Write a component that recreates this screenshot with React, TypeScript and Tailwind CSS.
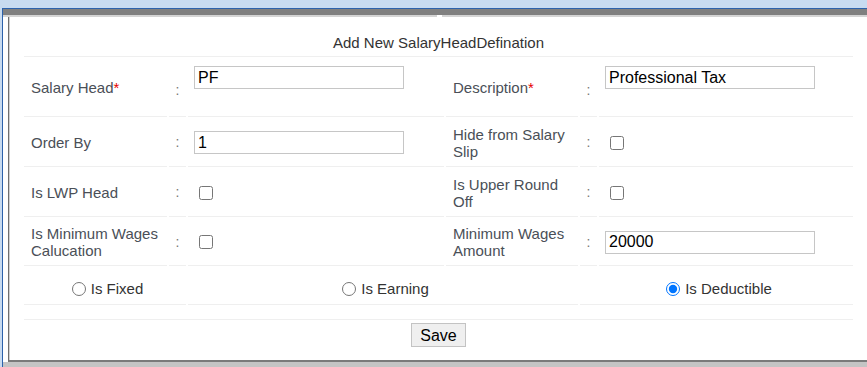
import { useState } from "react";

const COLS = "grid grid-cols-[143px_17px_256px_132px_17px_254px] gap-x-[2px]";
const LINE = "border-b border-[#efefef]";
const LABEL = `flex items-center pl-[7px] pr-[4px] text-[15px] leading-[17px] text-[#4a4f57] ${LINE}`;
const COLON = `flex items-center justify-center text-[14px] text-[#777] ${LINE}`;
const INPUT =
  "w-[210px] h-[23px] border border-[#c6c6c6] bg-white px-[3px] text-[16px] text-black outline-none";
const CHECK = "ml-[5px] h-[14px] w-[14px]";

function Req() {
  return <span className="text-[#e60000]">*</span>;
}

export default function App() {
  const [salaryHead, setSalaryHead] = useState("PF");
  const [description, setDescription] = useState("Professional Tax");
  const [orderBy, setOrderBy] = useState("1");
  const [minWages, setMinWages] = useState("20000");
  const [kind, setKind] = useState("deductible");

  return (
    <div className="flex h-[367px] w-[867px] flex-col overflow-hidden bg-[#c8dbf0] font-['Liberation_Sans',Arial,sans-serif]">
      <div className="h-[8px]" />
      <div className="flex flex-1 flex-col pl-[2px]">
        <div className="flex flex-1 flex-col border-l border-t border-[#2d62ab] bg-white">
          {/* window chrome */}
          <div className="h-[6px] bg-[#808080]" />
          <div className="flex h-[2px]">
            <div className="w-[434px] bg-[#d4d4d4]" />
            <div className="w-[5px] bg-white" />
            <div className="flex-1 bg-[#d4d4d4]" />
          </div>

          <div className="flex flex-1">
            <div className="w-[5px] bg-white" />
            <div className="flex flex-1 border-b-2 border-l border-b-[#7a7a7a] border-l-[#6f6f6f]">
              <div className="flex flex-1 flex-col border-l border-[#d0d0d0] bg-white pl-[14px]">
                <div className="flex w-[829px] flex-col gap-y-[2px]">
                  {/* title */}
                  <div className={`flex h-[40px] items-end justify-center pb-[5px] text-[15px] leading-[17px] text-[#333] ${LINE}`}>
                    Add New SalaryHeadDefination
                  </div>

                  {/* row 1 */}
                  <div className={`${COLS} h-[58px]`}>
                    <div className={LABEL}>
                      <span>
                        Salary Head<Req />
                      </span>
                    </div>
                    <div className={`${COLON} pt-[5px]`}>:</div>
                    <div className={`flex items-start pl-[6px] pt-[7px] ${LINE}`}>
                      <input
                        className={INPUT}
                        value={salaryHead}
                        onChange={(e) => setSalaryHead(e.target.value)}
                      />
                    </div>
                    <div className={LABEL}>
                      <span>
                        Description<Req />
                      </span>
                    </div>
                    <div className={`${COLON} pt-[5px]`}>:</div>
                    <div className={`flex items-start pl-[6px] pt-[7px] ${LINE}`}>
                      <input
                        className={INPUT}
                        value={description}
                        onChange={(e) => setDescription(e.target.value)}
                      />
                    </div>
                  </div>

                  {/* row 2 */}
                  <div className={`${COLS} h-[48px]`}>
                    <div className={LABEL}>Order By</div>
                    <div className={COLON}>:</div>
                    <div className={`flex items-center pl-[6px] ${LINE}`}>
                      <input
                        className={INPUT}
                        value={orderBy}
                        onChange={(e) => setOrderBy(e.target.value)}
                      />
                    </div>
                    <div className={LABEL}>Hide from Salary Slip</div>
                    <div className={COLON}>:</div>
                    <div className={`flex items-center pl-[6px] ${LINE}`}>
                      <input type="checkbox" className={CHECK} />
                    </div>
                  </div>

                  {/* row 3 */}
                  <div className={`${COLS} h-[48px]`}>
                    <div className={LABEL}>Is LWP Head</div>
                    <div className={COLON}>:</div>
                    <div className={`flex items-center pl-[6px] ${LINE}`}>
                      <input type="checkbox" className={CHECK} />
                    </div>
                    <div className={LABEL}>Is Upper Round Off</div>
                    <div className={COLON}>:</div>
                    <div className={`flex items-center pl-[6px] ${LINE}`}>
                      <input type="checkbox" className={CHECK} />
                    </div>
                  </div>

                  {/* row 4 */}
                  <div className={`${COLS} h-[47px]`}>
                    <div className={LABEL}>Is Minimum Wages Calucation</div>
                    <div className={COLON}>:</div>
                    <div className={`flex items-center pl-[6px] ${LINE}`}>
                      <input type="checkbox" className={CHECK} />
                    </div>
                    <div className={LABEL}>Minimum Wages Amount</div>
                    <div className={COLON}>:</div>
                    <div className={`flex items-center pl-[6px] ${LINE}`}>
                      <input
                        className={INPUT}
                        value={minWages}
                        onChange={(e) => setMinWages(e.target.value)}
                      />
                    </div>
                  </div>

                  {/* head type */}
                  <div className={`${COLS} h-[37px]`}>
                    {[
                      ["fixed", "Is Fixed"],
                      ["earning", "Is Earning"],
                      ["deductible", "Is Deductible"],
                    ].map(([key, text]) => (
                      <label
                        key={key}
                        className={`col-span-2 flex items-center justify-center pt-[6px] text-[15px] text-[#333] ${LINE}`}
                      >
                        <input
                          type="radio"
                          name="kind"
                          checked={kind === key}
                          onChange={() => setKind(key)}
                          className="ml-[5px] mr-[5px] h-[14px] w-[14px]"
                        />
                        {text}
                      </label>
                    ))}
                  </div>

                  <div className={`h-[13px] ${LINE}`} />

                  <div className="flex justify-center pt-[1px]">
                    <button className="h-[24px] border border-[#c3c3c3] bg-[#efefef] px-[8px] text-[16px] text-black">
                      Save
                    </button>
                  </div>
                </div>
              </div>
            </div>
          </div>
          <div className="h-[5px] bg-[#c4c4c4]" />
        </div>
      </div>
    </div>
  );
}
